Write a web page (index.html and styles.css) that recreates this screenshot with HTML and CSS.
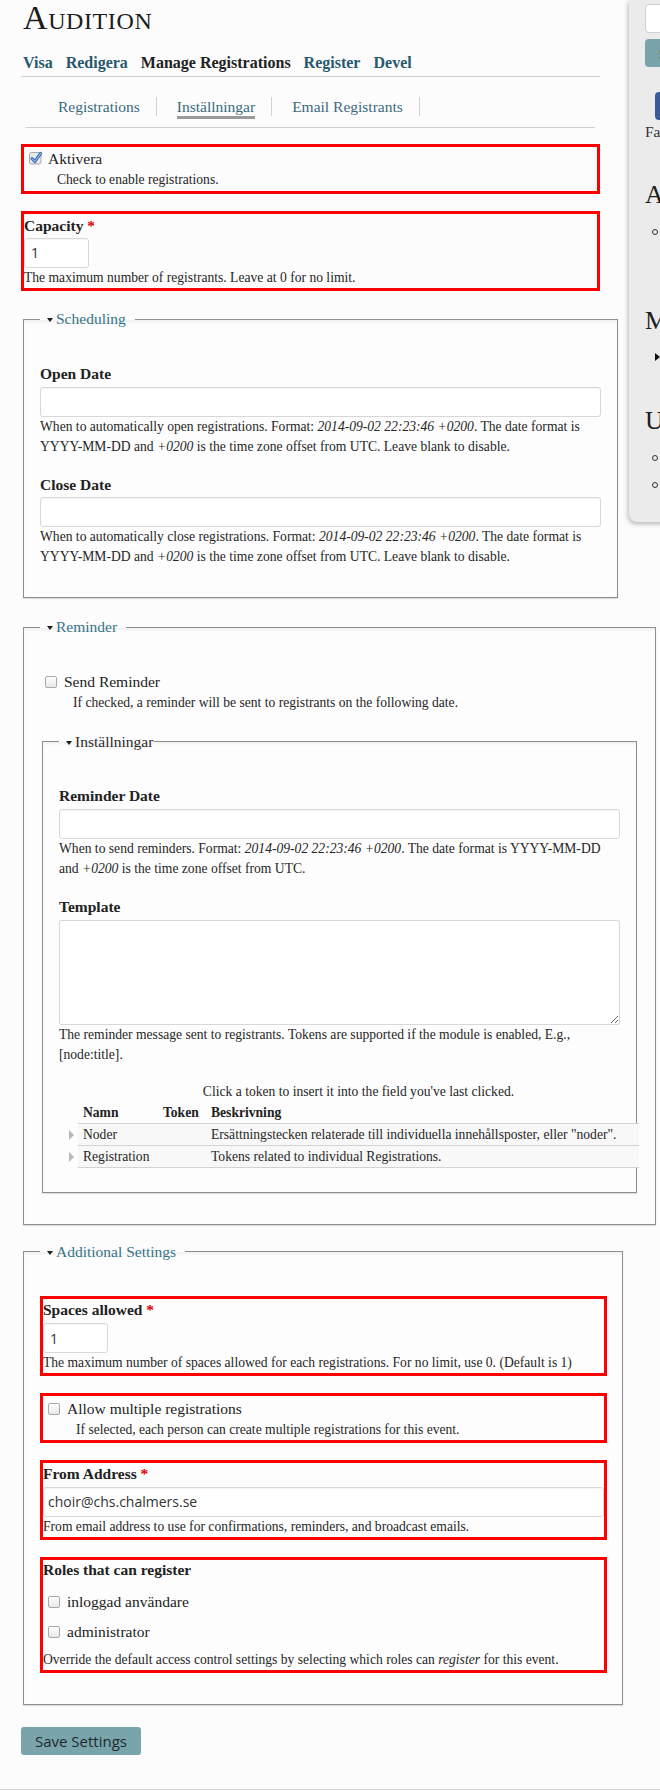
FILE: index.html
```html
<!DOCTYPE html>
<html lang="sv">
<head>
<meta charset="utf-8">
<title>Audition – Inställningar</title>
<link rel="stylesheet" href="styles.css">
</head>
<body>
<div class="page">
  <main class="main">
    <h1 class="title">Audition</h1>
    <ul class="tabs-primary">
      <li><a href="#">Visa</a></li>
      <li><a href="#">Redigera</a></li>
      <li class="active"><a href="#">Manage Registrations</a></li>
      <li><a href="#">Register</a></li>
      <li><a href="#">Devel</a></li>
    </ul>
    <ul class="tabs-secondary">
      <li><a href="#">Registrations</a></li>
      <li class="active"><a href="#">Inställningar</a></li>
      <li><a href="#">Email Registrants</a></li>
    </ul>

    <form class="form">
      <div class="box box-check box-first">
        <label class="check-label"><span class="cb-checked"><svg width="14" height="14" viewBox="0 0 14 14"><rect x="0.5" y="1.5" width="11.5" height="11.5" rx="2" fill="#e9eaec" stroke="#a8a8a8"/><path d="M3 7.6 L5.8 10.6 L11.6 2.4" fill="none" stroke="#2f5fae" stroke-width="3" stroke-linecap="round" stroke-linejoin="round"/><path d="M3 7.6 L5.8 10.6 L11.6 2.4" fill="none" stroke="#8fb4ea" stroke-width="1.2" stroke-linecap="round" stroke-linejoin="round"/></svg></span>Aktivera</label>
        <div class="desc desc-indent">Check to enable registrations.</div>
      </div>

      <div class="box box-field box-capacity">
        <label class="label">Capacity <span class="req">*</span></label>
        <input class="input input-small" type="text" value="1">
        <div class="desc">The maximum number of registrants. Leave at 0 for no limit.</div>
      </div>

      <fieldset class="fs fs-sched">
        <legend class="legend"><span class="tri"></span>Scheduling</legend>
        <div class="fitem">
          <label class="label">Open Date</label>
          <input class="input" type="text">
          <div class="desc">When to automatically open registrations. Format: <em>2014-09-02 22:23:46 +0200</em>. The date format is YYYY-MM-DD and <em>+0200</em> is the time zone offset from UTC. Leave blank to disable.</div>
        </div>
        <div class="fitem">
          <label class="label">Close Date</label>
          <input class="input" type="text">
          <div class="desc">When to automatically close registrations. Format: <em>2014-09-02 22:23:46 +0200</em>. The date format is YYYY-MM-DD and <em>+0200</em> is the time zone offset from UTC. Leave blank to disable.</div>
        </div>
      </fieldset>

      <fieldset class="fs fs-rem">
        <legend class="legend"><span class="tri"></span>Reminder</legend>
        <label class="check-label"><span class="cb"></span>Send Reminder</label>
        <div class="desc desc-indent desc-after-check">If checked, a reminder will be sent to registrants on the following date.</div>

        <fieldset class="fs fs-inner">
          <legend class="legend legend-plain"><span class="tri"></span>Inställningar</legend>
          <div class="fitem">
            <label class="label">Reminder Date</label>
            <input class="input" type="text">
            <div class="desc">When to send reminders. Format: <em>2014-09-02 22:23:46 +0200</em>. The date format is YYYY-MM-DD and <em>+0200</em> is the time zone offset from UTC.</div>
          </div>
          <div class="fitem">
            <label class="label">Template</label>
            <textarea class="textarea"></textarea>
            <div class="desc">The reminder message sent to registrants. Tokens are supported if the module is enabled, E.g., [node:title].</div>
          </div>
          <table class="tokens">
            <caption>Click a token to insert it into the field you've last clicked.</caption>
            <colgroup><col class="c-name"><col class="c-token"><col class="c-desc"></colgroup>
            <thead>
              <tr><th>Namn</th><th>Token</th><th>Beskrivning</th></tr>
            </thead>
            <tbody>
              <tr><td><span class="expander"></span>Noder</td><td></td><td>Ersättningstecken relaterade till individuella innehållsposter, eller "noder".</td></tr>
              <tr><td><span class="expander"></span>Registration</td><td></td><td>Tokens related to individual Registrations.</td></tr>
            </tbody>
          </table>
        </fieldset>
      </fieldset>

      <fieldset class="fs fs-add">
        <legend class="legend"><span class="tri"></span>Additional Settings</legend>
        <div class="box box-field">
          <label class="label">Spaces allowed <span class="req">*</span></label>
          <input class="input input-small" type="text" value="1">
          <div class="desc">The maximum number of spaces allowed for each registrations. For no limit, use 0. (Default is 1)</div>
        </div>

        <div class="box box-check">
          <label class="check-label"><span class="cb"></span>Allow multiple registrations</label>
          <div class="desc desc-indent">If selected, each person can create multiple registrations for this event.</div>
        </div>

        <div class="box box-field">
          <label class="label">From Address <span class="req">*</span></label>
          <input class="input input-email" type="text" value="choir@chs.chalmers.se">
          <div class="desc">From email address to use for confirmations, reminders, and broadcast emails.</div>
        </div>

        <div class="box box-roles">
          <div class="label">Roles that can register</div>
          <label class="check-label role"><span class="cb"></span>inloggad användare</label>
          <label class="check-label role"><span class="cb"></span>administrator</label>
          <div class="desc roles-desc">Override the default access control settings by selecting which roles can <em>register</em> for this event.</div>
        </div>
      </fieldset>

      <button class="save" type="button">Save Settings</button>
    </form>
  </main>

  <aside class="sidebar">
    <div class="search">
      <input class="search-input" type="text">
      <button class="search-btn" type="button">Sök</button>
    </div>
    <a class="fb" href="#"><span class="fb-icon"></span><span class="fb-text">Facebook</span></a>
    <h2 class="side-h side-h1">Aktuellt</h2>
    <ul class="side-list list-1">
      <li><span class="ring"></span>Nyheter</li>
    </ul>
    <h2 class="side-h side-h2">Meny</h2>
    <ul class="side-list list-2">
      <li><span class="arrow"></span>Evenemang</li>
    </ul>
    <h2 class="side-h side-h3">Utskick</h2>
    <ul class="side-list list-3">
      <li><span class="ring"></span>Mitt konto</li>
      <li><span class="ring"></span>Logga ut</li>
    </ul>
  </aside>
</div>
<div class="footer"></div>
</body>
</html>
```

FILE: styles.css
```css
* { box-sizing: border-box; }

html, body {
  margin: 0;
  padding: 0;
}

body {
  background: #fcfcfc;
  color: #222;
  font-family: "Liberation Serif", "Times New Roman", serif;
  overflow: hidden;
}

.page {
  display: flex;
  align-items: flex-start;
}

.main {
  flex: none;
  width: 579px;
  margin-left: 21px;
}

/* Title */
.title {
  margin: 0 0 0 2px;
  font-size: 34px;
  line-height: 36px;
  font-weight: normal;
  font-variant: small-caps;
  letter-spacing: 0.6px;
  color: #1c1c1c;
}

/* Primary tabs */
.tabs-primary {
  list-style: none;
  margin: 16.6px 0 0;
  padding: 0 0 3.4px 2px;
  display: flex;
  gap: 13px;
  border-bottom: 1px solid #cfcfcf;
  font-size: 16px;
  line-height: 20px;
  font-weight: bold;
}

.tabs-primary a {
  color: #28596c;
  text-decoration: none;
}

.tabs-primary .active a {
  color: #222;
}

/* Secondary tabs */
.tabs-secondary {
  list-style: none;
  margin: 0 5px;
  padding: 20px 0 11.3px 12px;
  display: flex;
  border-bottom: 1px solid #cfcfcf;
  font-size: 15.5px;
  line-height: 19px;
}

.tabs-secondary li {
  padding: 0 16px 0 20px;
  border-right: 1px solid #d2d2d2;
}

.tabs-secondary a {
  color: #3a6b7c;
  text-decoration: none;
}

.tabs-secondary .active a {
  padding-bottom: 1px;
  border-bottom: 3px solid #9a9a9a;
}

/* Form */
.form {
  margin-top: 15.7px;
}

.box {
  border: 3px solid #ff0000;
}

.box + .box {
  margin-top: 17px;
}

.box-check {
  padding: 2.5px 0 0.5px;
}

.box-field {
  padding-top: 1px;
}

.box-capacity {
  margin-top: 17.7px;
  padding-top: 1.8px;
}

.box-roles {
  padding: 0 0 0.3px;
}

.label {
  display: block;
  font-size: 15.5px;
  line-height: 20px;
  font-weight: bold;
  color: #222;
  margin-bottom: 2.8px;
}

.box-capacity .label {
  margin-bottom: 1.8px;
}

.req {
  color: #e00000;
}

.desc {
  font-size: 13.6px;
  line-height: 20px;
  color: #262626;
}

.desc em {
  font-style: italic;
}

.desc-indent {
  margin-left: 33px;
  margin-top: 1px;
}

.check-label {
  display: block;
  font-size: 15.5px;
  line-height: 20px;
  color: #222;
}

.cb {
  display: inline-block;
  width: 12px;
  height: 12px;
  margin: 0 7px 0 5px;
  vertical-align: -1px;
  border: 1px solid #a9a9a9;
  border-radius: 2px;
  background: linear-gradient(#ffffff, #e8e8e8);
}

.cb-checked {
  display: inline-block;
  width: 14px;
  height: 14px;
  margin: 0 5px 0 5px;
  vertical-align: -1px;
}

.cb-checked svg {
  display: block;
}

.input {
  display: block;
  width: 100%;
  height: 30px;
  margin: 0;
  padding: 0 6px;
  border: 1px solid #d8d8d8;
  border-radius: 3px;
  background: #fff;
  box-shadow: inset 0 1px 1px rgba(0, 0, 0, 0.04);
  font-family: "Open Sans", "DejaVu Sans", sans-serif;
  font-size: 14px;
  color: #333;
}

.input-small {
  width: 65px;
}

.input-email {
  height: 29.5px;
  padding-left: 4px;
}

.textarea {
  display: block;
  width: 100%;
  height: 105px;
  margin: 0;
  padding: 4px 6px;
  border: 1px solid #d8d8d8;
  border-radius: 2px;
  background: #fff;
  resize: vertical;
  font-family: "Open Sans", sans-serif;
  font-size: 14px;
}

/* Fieldsets */
.fs {
  min-width: 0;
  margin: 0 0 0 2px;
  padding: 34.5px 16px 30px;
  border: 1px solid #8e8e8e;
  background: #fdfdfd;
  box-shadow: inset 0 3px 4px -2px rgba(0, 0, 0, 0.08), 0 1px 1px rgba(0, 0, 0, 0.12);
}

.legend {
  padding: 0 9px 0 7px;
  font-size: 15.5px;
  line-height: 20px;
  color: #357487;
}

.legend-plain {
  padding-right: 1px;
  color: #2a2a2a;
}

.tri {
  display: inline-block;
  width: 0;
  height: 0;
  margin-right: 3px;
  vertical-align: 2px;
  border-top: 4px solid #1e1e1e;
  border-left: 3.5px solid transparent;
  border-right: 3.5px solid transparent;
}

.fitem + .fitem {
  margin-top: 18px;
}

.fs-sched {
  width: 595px;
  margin-top: 18.8px;
}

.fs-rem {
  width: 633px;
  margin-top: 18.7px;
  padding-bottom: 30.5px;
}

.desc-after-check {
  margin-top: 1.5px;
}

.fs-inner {
  width: 595px;
  margin-top: 18.7px;
  padding-bottom: 24.5px;
}

.fs-add {
  width: 600px;
  margin-top: 17.3px;
  padding-right: 15px;
  padding-bottom: 31px;
}

/* Token table */
.tokens {
  width: 561px;
  margin: 16.7px 0 0 19px;
  border-collapse: collapse;
  table-layout: fixed;
  font-size: 13.6px;
}

.tokens caption {
  line-height: 20px;
  text-align: center;
  color: #262626;
}

.c-name { width: 80px; }
.c-token { width: 48px; }

.tokens th,
.tokens td {
  padding: 1px 5px;
  line-height: 19px;
  text-align: left;
  white-space: nowrap;
}

.tokens th {
  font-weight: bold;
  color: #222;
  border-bottom: 1px solid #d3d3d3;
}

.tokens td {
  color: #262626;
  background: #f8f8f8;
  border-bottom: 1px solid #d3d3d3;
}

.expander {
  display: inline-block;
  width: 0;
  height: 0;
  margin: 0 9px 0 -14px;
  vertical-align: -1px;
  border-left: 5px solid #b9b9b9;
  border-top: 5px solid transparent;
  border-bottom: 5px solid transparent;
}

/* Roles */
.box-roles .label {
  margin-bottom: 0;
}

.role {
  margin-top: 12px;
}

.role + .role {
  margin-top: 10px;
}

.roles-desc {
  margin-top: 8px;
}

/* Save button */
.save {
  display: block;
  margin-top: 22px;
  height: 28px;
  padding: 0 14px;
  border: 0;
  border-radius: 3px;
  background: #79a4ac;
  color: #1e2a2d;
  font-family: "Open Sans", sans-serif;
  font-size: 15px;
  line-height: 28px;
}

/* Footer rule */
.footer {
  margin-top: 34.5px;
  height: 30px;
  border-top: 1px solid #d6d6d6;
}

/* Sidebar */
.sidebar {
  flex: none;
  width: 220px;
  height: 522px;
  margin-left: 29px;
  padding-left: 16px;
  overflow: hidden;
  background: #ebebeb;
  border-bottom-left-radius: 8px;
  box-shadow: -1px 2px 5px rgba(0, 0, 0, 0.28);
}

.search {
  padding-top: 4px;
}

.search-input {
  display: block;
  width: 160px;
  height: 29px;
  margin: 0;
  border: 1px solid #cfcfcf;
  border-radius: 4px;
  background: #fff;
}

.search-btn {
  display: block;
  width: 70px;
  height: 28px;
  margin-top: 6px;
  padding: 0 0 0 14px;
  border: 0;
  border-radius: 4px;
  background: #78a3ab;
  color: #222;
  font-family: "Open Sans", sans-serif;
  font-size: 14px;
  text-align: left;
}

.fb {
  display: block;
  margin-top: 25px;
  text-decoration: none;
}

.fb-icon {
  display: block;
  width: 28px;
  height: 28px;
  margin-left: 10px;
  border-radius: 4px;
  background: #3b5998;
}

.fb-text {
  display: block;
  margin-top: 2.4px;
  font-size: 15.5px;
  line-height: 20px;
  color: #333;
}

.side-h {
  margin: 0;
  font-size: 26px;
  line-height: 30px;
  font-weight: normal;
  color: #1e1e1e;
}

.side-h1 { margin-top: 37.8px; }
.side-h2 { margin-top: 64px; }
.side-h3 { margin-top: 39.2px; }

.side-list {
  list-style: none;
  margin: 0;
  padding: 0;
  font-size: 15px;
  line-height: 20px;
  white-space: nowrap;
}

.list-1 { margin-top: 12px; }
.list-2 { margin-top: 10.8px; }
.list-3 { margin-top: 11.8px; }

.list-3 li + li {
  margin-top: 7px;
}

.ring {
  display: inline-block;
  width: 6px;
  height: 6px;
  margin: 0 8px 0 7px;
  vertical-align: 2px;
  border: 1.3px solid #333;
  border-radius: 50%;
}

.arrow {
  display: inline-block;
  width: 0;
  height: 0;
  margin: 0 8px 0 10px;
  vertical-align: 1px;
  border-left: 5px solid #111;
  border-top: 4px solid transparent;
  border-bottom: 4px solid transparent;
}
```
